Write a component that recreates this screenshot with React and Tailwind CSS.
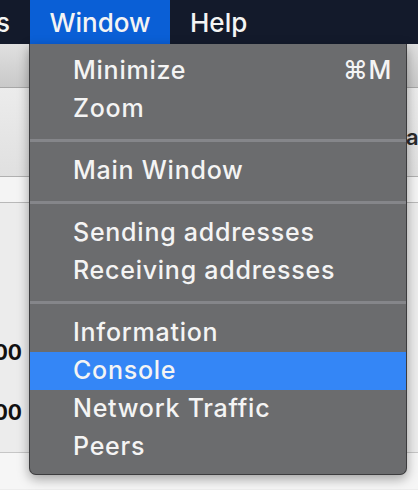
export default function App() {
  const Item = ({ label, shortcut, active }) => (
    <div
      className={`h-[38px] flex items-center justify-between pl-[43px] pr-[14px] ${active ? "bg-[#3486f6]" : ""}`}
    >
      <span>{label}</span>
      {shortcut ? <span>{shortcut}</span> : null}
    </div>
  );
  const Sep = () => (
    <div className="h-[24px] flex items-center">
      <div className="h-[3px] w-full bg-[#85868a]" />
    </div>
  );
  return (
    <div className="relative w-[418px] h-[490px] overflow-hidden bg-[#ededed] font-['Inter','Noto_Sans',sans-serif]">
      <div className="h-[44px] bg-[#131a2b] flex items-stretch text-[#f4f4f4] text-[26px] font-medium">
        <div className="w-[30px] overflow-hidden flex justify-end items-center pr-[20px] whitespace-nowrap">
          Tools
        </div>
        <div className="w-[140px] bg-[#0a5fd6] flex items-center justify-center">Window</div>
        <div className="pl-[20px] flex items-center">Help</div>
      </div>
      <div className="h-[44px] bg-gradient-to-b from-[#e0e0e0] to-[#c9c9c9] border-b border-[#a7a7a7]" />
      <div className="h-[89px] bg-gradient-to-b from-[#ececec] to-[#e0e0e0] border-b border-[#b0b0b0] flex items-end pb-[22px]">
        <span className="ml-[406px] text-[22px] font-semibold text-[#2a2a2a] whitespace-nowrap">as</span>
      </div>
      <div className="h-[26px] bg-[#f4f4f4] border-b border-[#b8b8b8]" />
      <div className="h-[250px] bg-[#ececec] border-b border-[#c6c6c6] flex flex-col pt-[139px] gap-[38px]">
        <div className="w-[22px] overflow-hidden flex justify-end whitespace-nowrap text-[21px] font-bold text-[#111] leading-[22px]">
          0.00000000
        </div>
        <div className="w-[22px] overflow-hidden flex justify-end whitespace-nowrap text-[21px] font-bold text-[#111] leading-[22px]">
          0.00000000
        </div>
      </div>
      <div className="h-[36px] bg-[#f6f6f6]" />

      <div className="absolute left-[29px] top-[44px] w-[378px] bg-[#6b6c6e] rounded-b-[7px] border border-t-0 border-[#3c3c3e] shadow-[0_4px_12px_rgba(0,0,0,0.35)] py-[8px] text-[25px] font-medium text-[#f4f4f4] tracking-[0.75px]">
        <Item label="Minimize" shortcut="⌘M" />
        <Item label="Zoom" />
        <Sep />
        <Item label="Main Window" />
        <Sep />
        <Item label="Sending addresses" />
        <Item label="Receiving addresses" />
        <Sep />
        <Item label="Information" />
        <Item label="Console" active />
        <Item label="Network Traffic" />
        <Item label="Peers" />
      </div>
    </div>
  );
}
